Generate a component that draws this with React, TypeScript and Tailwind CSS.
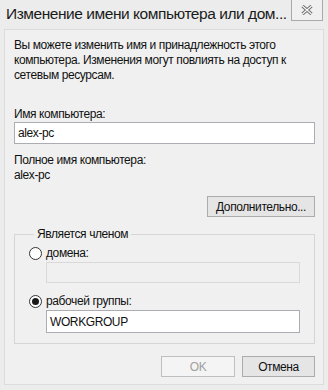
function Radio({ checked }: { checked?: boolean }) {
  return (
    <span className="flex h-[13px] w-[13px] shrink-0 items-center justify-center rounded-full border border-[#333] bg-white">
      {checked && <span className="h-[7px] w-[7px] rounded-full bg-[#1a1a1a]" />}
    </span>
  );
}

export default function App() {
  return (
    <div
      className="flex h-[390px] w-[328px] flex-col overflow-hidden bg-[#ececec] text-[#111]"
      style={{ fontFamily: '"Liberation Sans", Arial, sans-serif' }}
    >
      {/* Title bar */}
      <div className="flex h-[29px] shrink-0 items-start justify-between">
        <span className="mt-[4px] ml-[6px] text-[15.5px] leading-[20px] tracking-[-0.45px] whitespace-nowrap text-[#1a1a1a]">
          Изменение имени компьютера или дом...
        </span>
        <div className="mr-[5px] flex h-[21px] w-[32px] shrink-0 items-center justify-center border border-t-0 border-[#a9a9a9] bg-[#f0f0f0]">
          <svg width="12" height="10" viewBox="0 0 12 10">
            <path d="M1.5 1 L10.5 9 M10.5 1 L1.5 9" stroke="#6a6a6a" strokeWidth="3.2" />
            <path d="M1.5 1 L10.5 9 M10.5 1 L1.5 9" stroke="#f4f4f4" strokeWidth="1.4" />
          </svg>
        </div>
      </div>

      {/* Client area */}
      <div className="mx-[4px] mb-[5px] flex flex-1 flex-col border border-[#dcdcdc] bg-[#f0f0f0] pt-[8px] pr-[8px] pl-[9px] text-[12px] tracking-[-0.4px]">
        <p className="leading-[15px]">
          Вы можете изменить имя и принадлежность этого компьютера. Изменения могут повлиять на доступ к
          сетевым ресурсам.
        </p>

        <div className="mt-[24px] leading-[15px]">Имя компьютера:</div>
        <div className="flex h-[22px] items-center border border-[#abadb3] bg-white px-[3px]">alex-pc</div>

        <div className="mt-[9px] leading-[15px]">Полное имя компьютера:</div>
        <div className="leading-[15px]">alex-pc</div>

        <div className="mt-[13px] flex justify-end">
          <button className="h-[21px] w-[108px] border border-[#acacac] bg-[#e5e5e5] text-[12px] leading-none">
            Дополнительно...
          </button>
        </div>

        <fieldset className="mt-[10px] border border-[#d5d5d5] pr-[14px] pb-[10px] pl-[14px]">
          <legend className="ml-[5px] px-[3px] leading-[15px]">Является членом</legend>
          <label className="mt-[4px] flex items-center gap-[4px] leading-[15px]">
            <Radio />
            <span>домена:</span>
          </label>
          <div className="mt-[1px] ml-[17px] h-[21px] border border-[#d9d9d9] bg-[#f0f0f0]" />
          <label className="mt-[11px] flex items-center gap-[4px] leading-[15px]">
            <Radio checked />
            <span>рабочей группы:</span>
          </label>
          <div className="mt-[1px] ml-[17px] flex h-[23px] items-center border border-[#abadb3] bg-white px-[3px]">
            WORKGROUP
          </div>
        </fieldset>

        <div className="mt-[12px] flex justify-end gap-[7px]">
          <button className="h-[21px] w-[74px] border border-[#bfbfbf] bg-[#f4f4f4] text-[12px] leading-none text-[#a0a0a0]">
            OK
          </button>
          <button className="h-[21px] w-[73px] border border-[#acacac] bg-[#e5e5e5] text-[12px] leading-none">
            Отмена
          </button>
        </div>
      </div>
    </div>
  );
}
